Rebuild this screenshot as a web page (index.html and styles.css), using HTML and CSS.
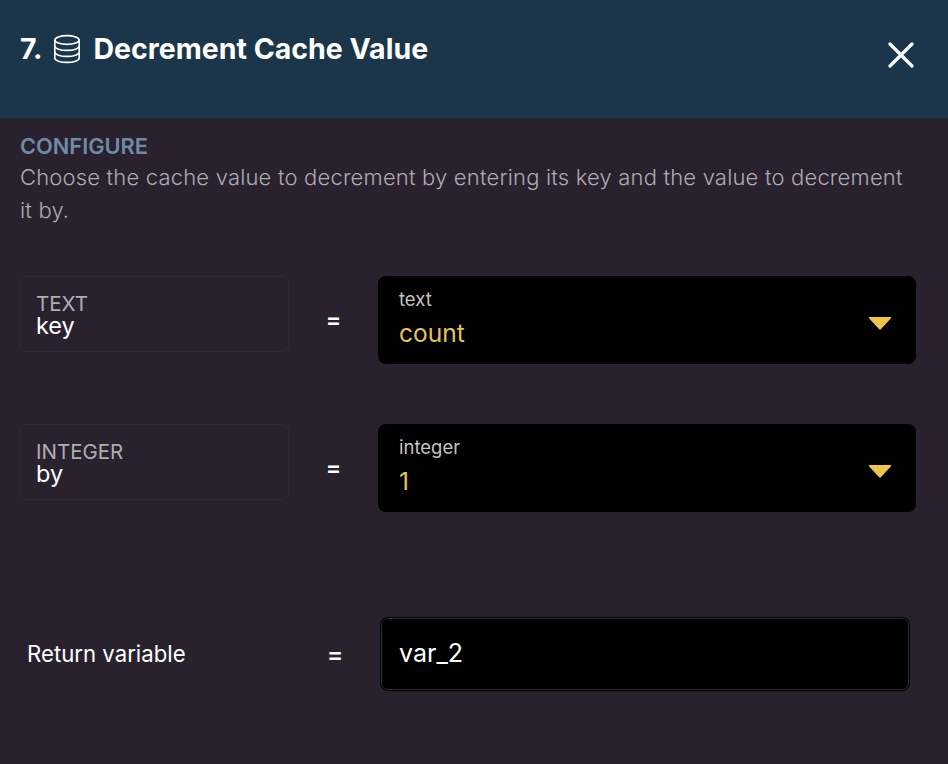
FILE: index.html
```html
<!DOCTYPE html>
<html lang="en">
	<head>
		<meta charset="UTF-8" />
		<meta name="viewport" content="width=device-width, initial-scale=1.0" />
		<title>Decrement Cache Value</title>
		<link rel="stylesheet" href="styles.css">
	</head>
	<body>
		<div class="modal">
			<header class="modal-header">
				<h1 class="modal-title">
					<span>7.</span>
					<svg class="db-icon" width="28" height="30" viewBox="0 0 28 30" fill="none" stroke="#fff" stroke-width="1.6">
						<ellipse cx="14" cy="6" rx="12.2" ry="4.4" />
						<path d="M1.8 6v18c0 2.5 5.5 4.4 12.2 4.4s12.2-1.9 12.2-4.4V6" />
						<path d="M1.8 12c0 2.5 5.5 4.4 12.2 4.4s12.2-1.9 12.2-4.4" />
						<path d="M1.8 18c0 2.5 5.5 4.4 12.2 4.4s12.2-1.9 12.2-4.4" />
					</svg>
					<span>Decrement Cache Value</span>
				</h1>
				<button class="close-button" aria-label="Close">
					<svg width="26" height="26" viewBox="0 0 26 26" fill="none" stroke="#fff" stroke-width="3.2" stroke-linecap="round">
						<path d="M2 2l22 22M24 2L2 24" />
					</svg>
				</button>
			</header>
			<main class="modal-body">
				<section class="configure">
					<h2 class="configure-title">CONFIGURE</h2>
					<p class="configure-text">Choose the cache value to decrement by entering its key and the value to decrement it by.</p>
				</section>
				<div class="param-row param-row--first">
					<div class="param-name">
						<div class="param-type">TEXT</div>
						<div class="param-key">key</div>
					</div>
					<div class="equals">=</div>
					<div class="select-box">
						<div>
							<div class="select-label">text</div>
							<div class="select-value">count</div>
						</div>
						<svg class="caret" width="24" height="14" viewBox="0 0 24 14"><path d="M1.5 1h21a.8.8 0 0 1 .6 1.3l-10.3 11a1 1 0 0 1-1.6 0L.9 2.300A.8.8 0 0 1 1.500 1z" fill="#ecc44f" /></svg>
					</div>
				</div>
				<div class="param-row">
					<div class="param-name">
						<div class="param-type">INTEGER</div>
						<div class="param-key">by</div>
					</div>
					<div class="equals">=</div>
					<div class="select-box">
						<div>
							<div class="select-label">integer</div>
							<div class="select-value">1</div>
						</div>
						<svg class="caret" width="24" height="14" viewBox="0 0 24 14"><path d="M1.5 1h21a.8.8 0 0 1 .6 1.3l-10.3 11a1 1 0 0 1-1.6 0L.9 2.300A.8.8 0 0 1 1.500 1z" fill="#ecc44f" /></svg>
					</div>
				</div>
				<div class="return-row">
					<div class="return-label">Return variable</div>
					<div class="equals equals--return">=</div>
					<div class="return-input">var_2</div>
				</div>
			</main>
		</div>
	</body>
</html>
```

FILE: styles.css
```css
* {
	padding: 0;
	margin: 0;
	box-sizing: border-box;
}
html,
body {
	height: 100%;
	overflow: hidden;
}
body {
	background-color: #2a212e;
	font-family: Inter, "Liberation Sans", sans-serif;
	color: #fff;
}
.modal {
	width: 948px;
	height: 764px;
}
.modal-header {
	height: 118px;
	background-color: #1b364b;
	padding: 30px 34px 0 20px;
	display: flex;
	justify-content: space-between;
	align-items: flex-start;
}
.modal-title {
	display: flex;
	align-items: center;
	gap: 12px;
	font-size: 28.500px;
	line-height: 38px;
	font-weight: 700;
}
.db-icon {
	margin-left: -2px;
	margin-right: 1px;
}
.close-button {
	background: none;
	border: none;
	margin-top: 12px;
	display: flex;
}
.modal-body {
	padding: 14px 32px 0 20px;
}
.configure-title {
	font-size: 21.800px;
	line-height: 28px;
	font-weight: 600;
	color: #6f8ba6;
}
.configure-text {
	max-width: 890px;
	font-size: 22px;
	line-height: 33px;
	font-weight: 300;
	color: #aeaab1;
	letter-spacing: 0.180px;
	padding-top: 1px;
}
.param-row {
	display: flex;
	align-items: stretch;
	height: 88px;
	margin-top: 60px;
}
.param-row--first {
	margin-top: 49px;
}
.param-name {
	width: 269px;
	height: 76px;
	border: 1px solid #312835;
	border-radius: 6px;
	padding: 15px 15px 0;
}
.param-type {
	font-size: 20.500px;
	line-height: 24px;
	color: #b0adb3;
}
.param-key {
	font-size: 23.500px;
	line-height: 20px;
	color: #fff;
}
.equals {
	width: 89px;
	padding-top: 29px;
	text-align: center;
	font-size: 23px;
	line-height: 30px;
	font-weight: 600;
}
.select-box {
	width: 538px;
	background-color: #000;
	border-radius: 8px;
	padding: 11px 24px 11px 21px;
	display: flex;
	justify-content: space-between;
	align-items: flex-start;
}
.select-label {
	font-size: 18.500px;
	line-height: 24px;
	color: #c4c4c4;
}
.select-value {
	font-size: 24.500px;
	line-height: 32px;
	margin-top: 6px;
	color: #e6c261;
}
.caret {
	margin-top: 29px;
}
.return-row {
	display: flex;
	align-items: center;
	margin-top: 105px;
	height: 74px;
}
.return-label {
	width: 270px;
	padding-left: 7px;
	font-size: 22.200px;
	line-height: 30px;
}
.equals--return {
	width: 90px;
	padding-top: 2px;
	font-size: 24px;
}
.return-input {
	width: 530px;
	height: 74px;
	background-color: #000;
	border: 2px solid #000;
	outline: 1px solid #2f2f2f;
	outline-offset: -2px;
	border-radius: 8px;
	padding: 18px 17px;
	font-size: 25px;
	line-height: 32px;
}
```
